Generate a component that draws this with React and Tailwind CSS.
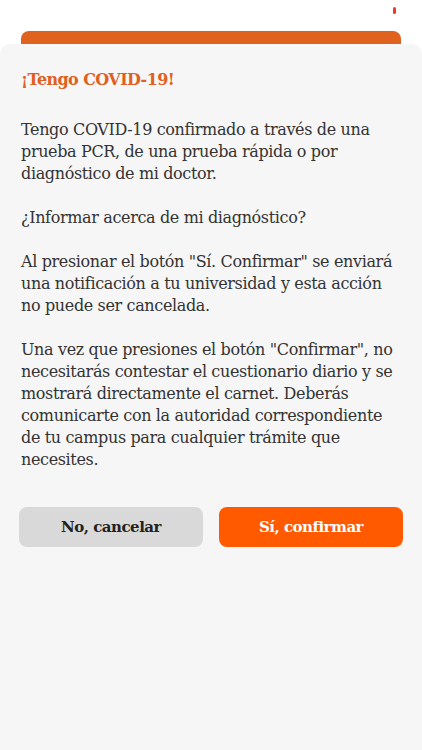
import React from "react";

const paragraphs = [
  "Tengo COVID-19 confirmado a través de una prueba PCR, de una prueba rápida o por diagnóstico de mi doctor.",
  "¿Informar acerca de mi diagnóstico?",
  'Al presionar el botón "Sí. Confirmar" se enviará una notificación a tu universidad y esta acción no puede ser cancelada.',
  'Una vez que presiones el botón "Confirmar", no necesitarás contestar el cuestionario diario y se mostrará directamente el carnet. Deberás comunicarte con la autoridad correspondiente de tu campus para cualquier trámite que necesites.',
];

export default function App() {
  return (
    <div
      className="w-[422px] h-[750px] bg-white flex flex-col overflow-hidden"
      style={{ fontFamily: '"DejaVu Serif", serif' }}
    >
      <div className="h-[31px] flex justify-end pr-[26px] pt-[7px]">
        <div className="w-[3px] h-[7px] rounded-full bg-[#f0392b]" />
      </div>
      <div className="mx-[21px] h-[13px] rounded-t-[8px] bg-[#e0621f]" />
      <div className="flex-1 bg-[#f6f6f6] rounded-t-[10px] px-[21px] pt-[23px]">
        <h1 className="text-[16px] font-bold text-[#e0601f] leading-[26px] tracking-[-0.6px]">¡Tengo COVID-19!</h1>
        <div className="mt-[26px] w-[372px] flex flex-col gap-[22px] text-[16px] leading-[22px] tracking-[-0.36px] text-[#333333]">
          {paragraphs.map((p, i) => (
            <p key={i}>{p}</p>
          ))}
        </div>
        <div className="mt-[36px] -mx-[2px] flex gap-[16px]">
          <button className="flex-1 h-[40px] rounded-[8px] bg-[#d9d9d9] text-[#222222] text-[15px] font-bold tracking-[-0.5px]">
            No, cancelar
          </button>
          <button className="flex-1 h-[40px] rounded-[8px] bg-[#ff5a00] text-white text-[15px] font-bold tracking-[-0.5px]">
            Sí, confirmar
          </button>
        </div>
      </div>
    </div>
  );
}
